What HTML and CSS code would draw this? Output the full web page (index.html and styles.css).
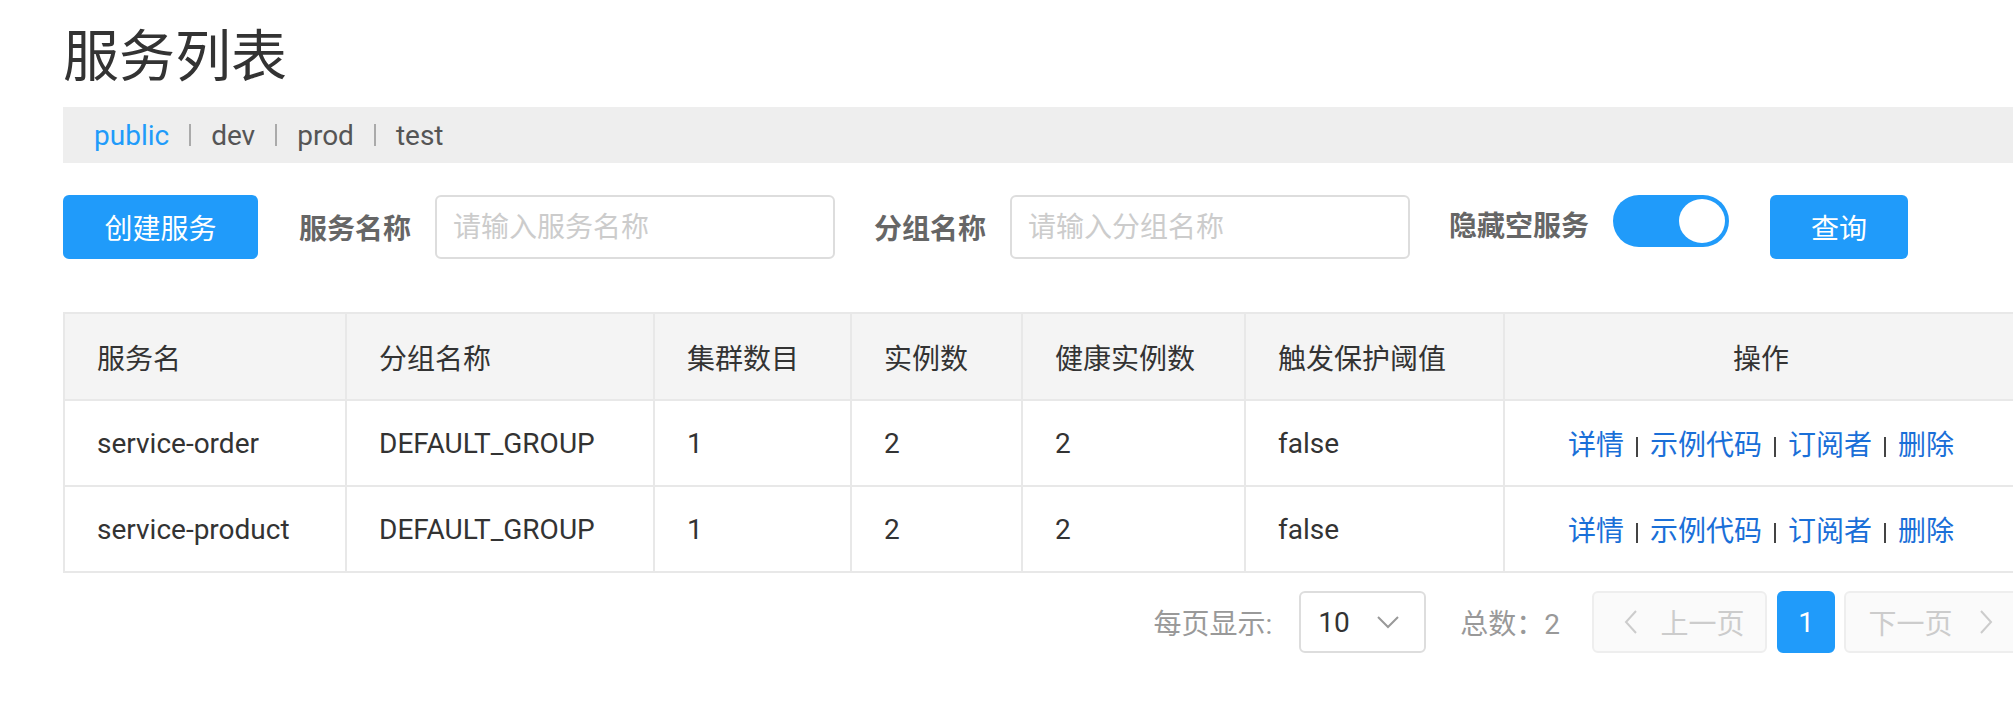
FILE: index.html
```html
<!DOCTYPE html>
<html lang="zh-CN">
<head>
    <meta charset="UTF-8">
    <title>服务列表</title>
    <link rel="stylesheet" href="styles.css">
</head>
<body>
    <div class="page">
        <h1 class="page-title">服务列表</h1>

        <div class="ns-bar">
            <span class="ns-item active">public</span>
            <span class="ns-sep"></span>
            <span class="ns-item">dev</span>
            <span class="ns-sep"></span>
            <span class="ns-item">prod</span>
            <span class="ns-sep"></span>
            <span class="ns-item">test</span>
        </div>

        <div class="toolbar">
            <button class="btn btn-primary btn-create">创建服务</button>
            <div class="field">
                <label class="field-label">服务名称</label>
                <input class="field-input" type="text" placeholder="请输入服务名称">
            </div>
            <div class="field">
                <label class="field-label">分组名称</label>
                <input class="field-input" type="text" placeholder="请输入分组名称">
            </div>
            <div class="field field-switch">
                <label class="field-label">隐藏空服务</label>
                <span class="switch on"><span class="switch-knob"></span></span>
            </div>
            <button class="btn btn-primary btn-query">查询</button>
        </div>

        <table class="service-table">
            <colgroup>
                <col style="width: 282px">
                <col style="width: 308px">
                <col style="width: 197px">
                <col style="width: 171px">
                <col style="width: 223px">
                <col style="width: 259px">
                <col>
            </colgroup>
            <thead>
                <tr>
                    <th>服务名</th>
                    <th>分组名称</th>
                    <th>集群数目</th>
                    <th>实例数</th>
                    <th>健康实例数</th>
                    <th>触发保护阈值</th>
                    <th class="center">操作</th>
                </tr>
            </thead>
            <tbody>
                <tr>
                    <td>service-order</td>
                    <td>DEFAULT_GROUP</td>
                    <td>1</td>
                    <td>2</td>
                    <td>2</td>
                    <td>false</td>
                    <td class="center actions">
                        <a>详情</a><span class="sep"></span><a>示例代码</a><span class="sep"></span><a>订阅者</a><span class="sep"></span><a>删除</a>
                    </td>
                </tr>
                <tr>
                    <td>service-product</td>
                    <td>DEFAULT_GROUP</td>
                    <td>1</td>
                    <td>2</td>
                    <td>2</td>
                    <td>false</td>
                    <td class="center actions">
                        <a>详情</a><span class="sep"></span><a>示例代码</a><span class="sep"></span><a>订阅者</a><span class="sep"></span><a>删除</a>
                    </td>
                </tr>
            </tbody>
        </table>

        <div class="pagination">
            <span class="pg-label">每页显示:</span>
            <div class="pg-select">
                <span>10</span>
                <svg width="24" height="14" viewBox="0 0 24 14"><polyline points="2,2 12,12 22,2" fill="none" stroke="#999" stroke-width="2"/></svg>
            </div>
            <span class="pg-total">总数：2</span>
            <button class="pg-btn pg-nav pg-prev" disabled>
                <svg width="14" height="26" viewBox="0 0 14 26"><polyline points="12,2 2,13 12,24" fill="none" stroke="#ccc" stroke-width="2"/></svg>
                上一页
            </button>
            <button class="pg-btn pg-current">1</button>
            <button class="pg-btn pg-nav pg-next" disabled>
                下一页
                <svg width="14" height="26" viewBox="0 0 14 26"><polyline points="2,2 12,13 2,24" fill="none" stroke="#ccc" stroke-width="2"/></svg>
            </button>
        </div>
    </div>
</body>
</html>
```

FILE: styles.css
```css
body {
    margin: 0;
    overflow: hidden;
    background-color: #fff;
    color: #333;
    font-family: Roboto, "Noto Sans CJK SC", sans-serif;
    font-size: 28px;
}
.page {
    width: 1956px;
    padding: 27px 0 0 63px;
}
.page-title {
    margin: 0;
    font-size: 56px;
    font-weight: normal;
    line-height: 60px;
    color: #333;
}
.ns-bar {
    display: flex;
    align-items: center;
    gap: 20px;
    height: 56px;
    margin-top: 20px;
    padding-left: 31px;
    background-color: #eee;
    color: #555;
}
.ns-item.active {
    color: #209bfa;
}
.ns-sep {
    width: 2px;
    height: 22px;
    background-color: #aaa;
}
.toolbar {
    display: flex;
    align-items: center;
    height: 64px;
    margin-top: 32px;
}
.btn {
    height: 64px;
    border: none;
    border-radius: 6px;
    font-family: inherit;
    font-size: 28px;
    cursor: pointer;
}
.btn-primary {
    background-color: #209bfa;
    color: #fff;
}
.btn-create {
    width: 195px;
}
.btn-query {
    width: 138px;
    margin-left: 41px;
}
.field {
    display: flex;
    align-items: center;
    margin-left: 41px;
}
.field + .field {
    margin-left: 39px;
}
.field-label {
    margin-right: 24px;
    font-weight: bold;
    color: #666;
}
.field-input {
    box-sizing: border-box;
    width: 400px;
    height: 64px;
    padding: 0 16px;
    border: 2px solid #ddd;
    border-radius: 6px;
    font-family: inherit;
    font-size: 28px;
    color: #333;
}
.field-input::placeholder {
    color: #ccc;
}
.field-switch {
    align-self: flex-start;
}
.field-switch .field-label {
    margin-top: 6px;
}
.switch {
    box-sizing: border-box;
    display: flex;
    justify-content: flex-end;
    align-items: center;
    width: 116px;
    height: 52px;
    padding: 4px;
    border-radius: 26px;
    background-color: #209bfa;
}
.switch-knob {
    width: 46px;
    height: 44px;
    border-radius: 50%;
    background-color: #fff;
}
.service-table {
    width: 1956px;
    margin-top: 53px;
    border-collapse: collapse;
    table-layout: fixed;
}
.service-table th,
.service-table td {
    height: 84px;
    padding: 0 32px;
    border: 2px solid #e8e8e8;
    text-align: left;
    white-space: nowrap;
}
.service-table th {
    height: 85px;
    background-color: #f4f4f4;
    font-weight: normal;
    color: #333;
}
.service-table .center {
    text-align: center;
}
.actions a {
    color: #1a6fd8;
    cursor: pointer;
}
.actions .sep {
    display: inline-block;
    width: 2px;
    height: 20px;
    margin: 0 12px;
    background-color: #444;
    vertical-align: -2px;
}
.pagination {
    display: flex;
    justify-content: flex-end;
    align-items: center;
    width: 1956px;
    margin-top: 18px;
}
.pg-label,
.pg-total {
    color: #999;
}
.pg-select {
    box-sizing: border-box;
    display: flex;
    align-items: center;
    justify-content: space-between;
    width: 127px;
    height: 62px;
    margin-left: 27px;
    padding: 0 24px 0 17px;
    border: 2px solid #ddd;
    border-radius: 6px;
    color: #333;
}
.pg-total {
    margin-left: 34px;
}
.pg-btn {
    box-sizing: border-box;
    display: flex;
    align-items: center;
    justify-content: center;
    height: 62px;
    border: 2px solid #eee;
    border-radius: 6px;
    font-family: inherit;
    font-size: 28px;
}
.pg-nav {
    gap: 22px;
    width: 175px;
    background-color: #fafafa;
    color: #ccc;
}
.pg-prev {
    margin-left: 32px;
    padding-left: 16px;
}
.pg-next {
    padding-right: 8px;
    gap: 26px;
}
.pg-current {
    width: 58px;
    margin: 0 9px 0 10px;
    border-color: #209bfa;
    background-color: #209bfa;
    color: #fff;
}
```
